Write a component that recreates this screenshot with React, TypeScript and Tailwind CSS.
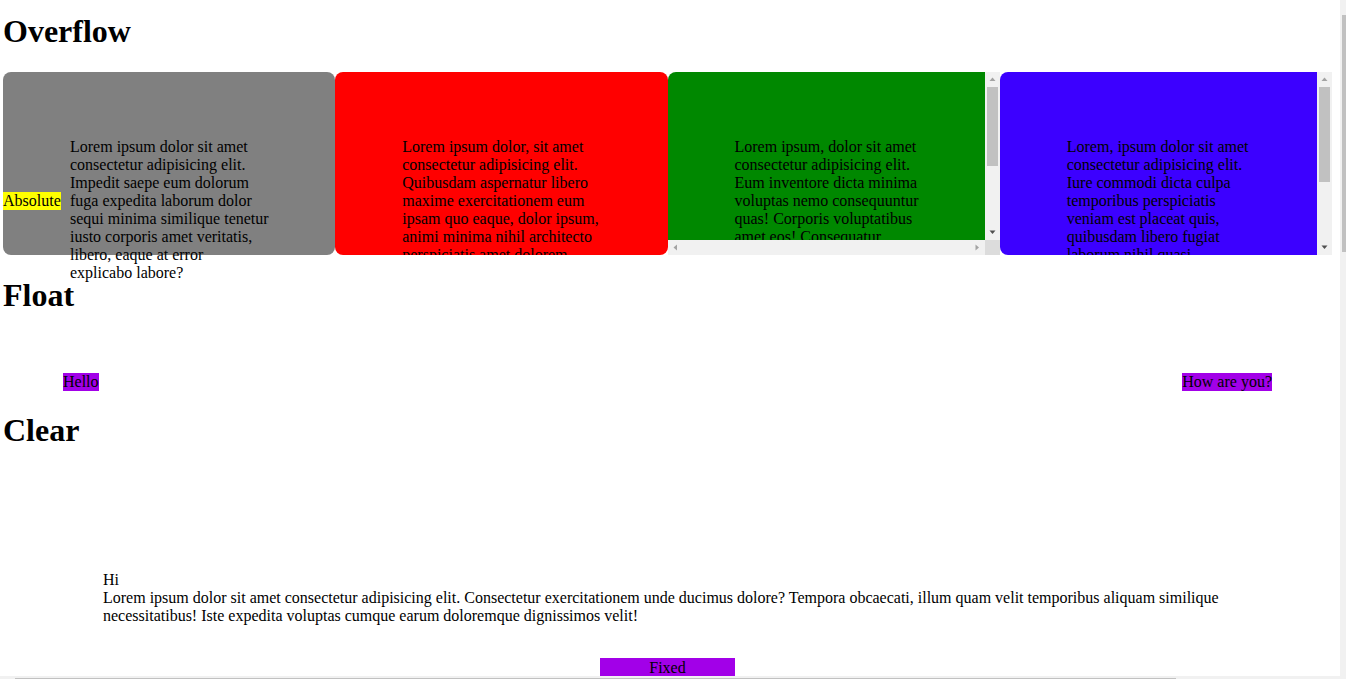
function Arrow({ dir, color }: { dir: "up" | "down" | "left" | "right"; color: string }) {
  const pts =
    dir === "up"
      ? "0.5,4 3.5,0.5 6.5,4"
      : dir === "down"
      ? "0.5,0.5 6.5,0.5 3.5,4"
      : dir === "left"
      ? "4,0.5 4,6.5 0.5,3.5"
      : "0.5,0.5 0.5,6.5 4,3.5";
  const w = dir === "up" || dir === "down" ? 7 : 5;
  const h = dir === "up" || dir === "down" ? 5 : 7;
  return (
    <div className="flex h-[15px] w-[15px] shrink-0 items-center justify-center">
      <svg width={w} height={h} viewBox={`0 0 ${w} ${h}`}>
        <polygon points={pts} fill={color} />
      </svg>
    </div>
  );
}

function VScroll({ thumb }: { thumb: number }) {
  return (
    <div className="flex h-full w-[15px] shrink-0 flex-col bg-[#f1f1f1]">
      <Arrow dir="up" color="#a3a3a3" />
      <div className="min-h-0 flex-1">
        <div className="mx-[2px] w-[11px] bg-[#c1c1c1]" style={{ height: thumb }} />
      </div>
      <Arrow dir="down" color="#505050" />
    </div>
  );
}

export default function App() {
  return (
    <div className="min-h-[679px] bg-white pl-[3px] pr-[14px] font-['Liberation_Serif','Times_New_Roman',serif] text-[16px] text-black">
      <h1 className="mt-[13px] text-[32px] font-bold leading-[37px]">Overflow</h1>
      <div className="mt-[22px] grid grid-cols-4">
        <div className="relative h-[183px] min-w-0 rounded-lg bg-[#808080] pl-[67px] pt-[66px]">
          <span className="absolute left-0 top-[120px] bg-[#ffff00] leading-[18px]">Absolute</span>
          <p className="w-[199px] leading-[18px]">
            Lorem ipsum dolor sit amet consectetur adipisicing elit. Impedit saepe eum dolorum fuga expedita
            laborum dolor sequi minima similique tenetur iusto corporis amet veritatis, libero, eaque at error
            explicabo labore?
          </p>
        </div>
        <div className="h-[183px] min-w-0 overflow-hidden rounded-lg bg-[#ff0000] pl-[67px] pt-[66px]">
          <p className="w-[199px] leading-[18px]">
            Lorem ipsum dolor, sit amet consectetur adipisicing elit. Quibusdam aspernatur libero maxime
            exercitationem eum ipsam quo eaque, dolor ipsum, animi minima nihil architecto perspiciatis amet
            dolorem consequatur.
          </p>
        </div>
        <div className="flex h-[183px] min-w-0 flex-col">
          <div className="flex min-h-0 flex-1">
            <div className="min-w-0 flex-1 overflow-hidden rounded-tl-lg bg-[#008800] pl-[67px] pt-[66px]">
              <p className="w-[189px] leading-[18px]">
                Lorem ipsum, dolor sit amet consectetur adipisicing elit. Eum inventore dicta minima voluptas
                nemo consequuntur quas! Corporis voluptatibus amet eos! Consequatur nesciunt ipsa quod,
                repudiandae aut tempora deleniti iure.
              </p>
            </div>
            <VScroll thumb={79} />
          </div>
          <div className="flex h-[15px] shrink-0">
            <div className="flex flex-1 justify-between bg-[#f1f1f1]">
              <Arrow dir="left" color="#a3a3a3" />
              <Arrow dir="right" color="#a3a3a3" />
            </div>
            <div className="h-[15px] w-[15px] bg-[#dcdcdc]" />
          </div>
        </div>
        <div className="flex h-[183px] min-w-0">
          <div className="min-w-0 flex-1 overflow-hidden rounded-l-lg bg-[#3c00ff] pl-[67px] pt-[66px]">
            <p className="w-[189px] leading-[18px]">
              Lorem, ipsum dolor sit amet consectetur adipisicing elit. Iure commodi dicta culpa temporibus
              perspiciatis veniam est placeat quis, quibusdam libero fugiat laborum nihil quasi consequuntur
              doloribus voluptate.
            </p>
          </div>
          <VScroll thumb={95} />
        </div>
      </div>

      <h1 className="mt-[22px] text-[32px] font-bold leading-[37px]">Float</h1>
      <div className="mt-[59px] flex justify-between px-[60px]">
        <span className="bg-[#a200e8] leading-[18px]">Hello</span>
        <span className="bg-[#a200e8] leading-[18px]">How are you?</span>
      </div>

      <h1 className="mt-[21px] text-[32px] font-bold leading-[37px]">Clear</h1>
      <div className="mx-[100px] mt-[122px] leading-[18px]">
        <div>Hi</div>
        <p>
          Lorem ipsum dolor sit amet consectetur adipisicing elit. Consectetur exercitationem unde ducimus
          dolore? Tempora obcaecati, illum quam velit temporibus aliquam similique necessitatibus! Iste expedita
          voluptas cumque earum doloremque dignissimos velit!
        </p>
      </div>

      <div className="fixed bottom-[3px] left-[600px] h-[18px] w-[135px] bg-[#a200e8] text-center leading-[20px]">
        Fixed
      </div>

      <div className="fixed right-0 top-0 h-[676px] w-[6px] bg-[#f1f1f1]">
        <div className="ml-[2px] mt-[15px] h-[237px] w-[4px] bg-[#c1c1c1]" />
      </div>
      <div className="fixed bottom-0 left-0 h-[3px] w-full bg-[#f1f1f1]">
        <div className="ml-[15px] mt-[2px] h-[1px] w-[1161px] bg-[#c1c1c1]" />
      </div>
    </div>
  );
}
